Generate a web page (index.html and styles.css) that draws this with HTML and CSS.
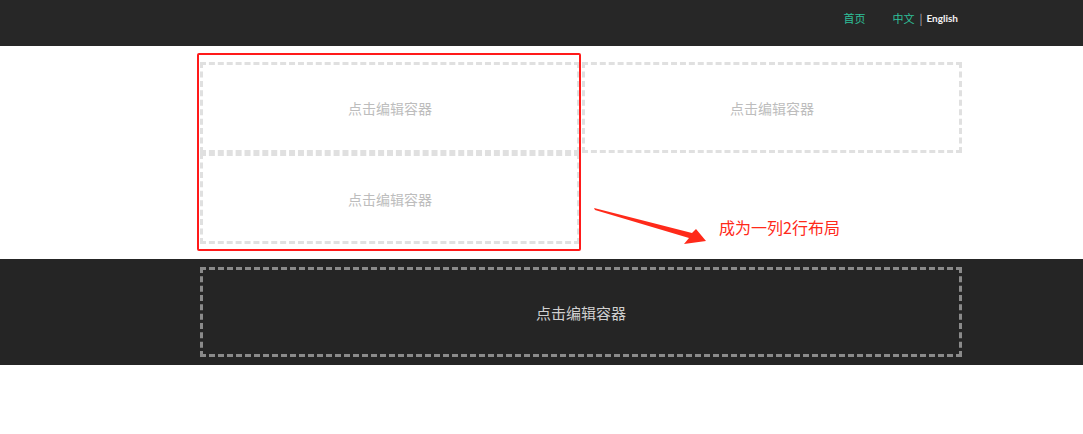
FILE: index.html
```html
<!DOCTYPE html>
<html>

<head>
  <meta charset="utf-8">
  <meta name="viewport" content="width=device-width, initial-scale=1.0">
  <link rel="stylesheet" href="styles.css">
</head>

<body>
  <div class="header">
    <div class="wrap nav">
      <a class="nav-link">首页</a>
      <div class="lang">
        <a class="nav-link">中文</a>
        <span class="sep">|</span>
        <a class="lang-en">English</a>
      </div>
    </div>
  </div>

  <div class="main">
    <div class="wrap row">
      <div class="col">
        <div class="box">点击编辑容器</div>
        <div class="box">点击编辑容器</div>
      </div>
      <div class="col">
        <div class="box">点击编辑容器</div>
      </div>
    </div>

    <!-- annotation -->
    <div class="mark"></div>
    <svg class="arrow" width="130" height="50" viewBox="0 0 130 50">
      <polygon points="4,8 102,33 106,29 116,41 94,44 99,38 5,10" fill="#ff2a1a" />
    </svg>
    <div class="note">成为一列2行布局</div>
  </div>

  <div class="footer">
    <div class="wrap">
      <div class="box box-dark">点击编辑容器</div>
    </div>
  </div>
</body>

</html>
```

FILE: styles.css
```css
* {
  box-sizing: border-box;
  margin: 0;
  padding: 0;
}

body {
  font-family: "Noto Sans CJK SC", "Liberation Sans", sans-serif;
  background-color: #fff;
}

.wrap {
  width: 762px;
  margin-left: 200px;
}

.header {
  height: 46px;
  background-color: #272727;
}

.nav {
  display: flex;
  justify-content: flex-end;
  align-items: center;
  height: 35px;
  padding-right: 4px;
  font-size: 11px;
}

.nav-link {
  color: #2fc09a;
}

.lang {
  display: flex;
  align-items: center;
  margin-left: 27px;
}

.sep {
  color: #bbb;
  margin: 0 4px 0 5px;
}

.lang-en {
  color: #f2f2f2;
  font-family: Lato, sans-serif;
  font-size: 10px;
  font-weight: 700;
}

.main {
  position: relative;
  height: 213px;
  padding-top: 16px;
}

.row {
  display: flex;
  gap: 2px;
}

.col {
  width: 380px;
  display: flex;
  flex-direction: column;
}

.box {
  height: 91px;
  border: 3px dashed #e0e0e0;
  display: flex;
  justify-content: center;
  align-items: center;
  font-size: 14px;
  color: #bdbdbd;
}

.mark {
  position: absolute;
  left: 197px;
  top: 7px;
  width: 384px;
  height: 198px;
  border: 2px solid #ff1a1a;
  border-radius: 2px;
}

.arrow {
  position: absolute;
  left: 590px;
  top: 154px;
}

.note {
  position: absolute;
  left: 719px;
  top: 169px;
  font-size: 16px;
  color: #ff2a1a;
}

.footer {
  height: 106px;
  background-color: #252525;
  padding-top: 8px;
}

.box-dark {
  height: 90px;
  border-color: #8a8a8a;
  color: #d0d0d0;
  font-size: 15px;
}
```
